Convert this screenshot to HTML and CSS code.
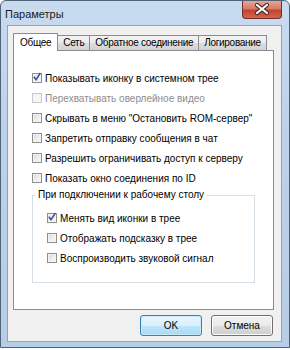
FILE: index.html
```html
<!DOCTYPE html>
<html lang="ru">
  <head>
    <meta charset="UTF-8" />
    <meta name="viewport" content="width=device-width, initial-scale=1.0" />
    <title>Параметры</title>
    <link rel="stylesheet" href="styles.css">
  </head>
  <body>
    <div class="window">
      <div class="titlebar">
        <span class="title">Параметры</span>
        <div class="close">
          <svg width="38" height="17" viewBox="0 0 38 17">
            <path d="M14 4 L24 12 M24 4 L14 12" stroke="#4a2a28" stroke-width="4.2" stroke-linecap="round" />
            <path d="M14 4 L24 12 M24 4 L14 12" stroke="#ffffff" stroke-width="2.2" stroke-linecap="round" />
          </svg>
        </div>
      </div>

      <div class="client">
        <div class="tabs">
          <div class="tab tab-active">Общее</div>
          <div class="tab">Сеть</div>
          <div class="tab">Обратное соединение</div>
          <div class="tab">Логирование</div>
        </div>

        <div class="panel">
          <div class="check checked"><span class="box"><svg width="10" height="10" viewBox="0 0 10 10"><path d="M1.8 4.8 L4 7.6 L8.4 1" fill="none" stroke="#3a5896" stroke-width="1.6" /></svg></span>Показывать иконку в системном трее</div>
          <div class="check disabled"><span class="box"></span>Перехватывать оверлейное видео</div>
          <div class="check"><span class="box"></span>Скрывать в меню "Остановить ROM-сервер"</div>
          <div class="check"><span class="box"></span>Запретить отправку сообщения в чат</div>
          <div class="check"><span class="box"></span>Разрешить ограничивать доступ к серверу</div>
          <div class="check"><span class="box"></span>Показать окно соединения по ID</div>

          <fieldset class="group">
            <legend>При подключении к рабочему столу</legend>
            <div class="check checked"><span class="box"><svg width="10" height="10" viewBox="0 0 10 10"><path d="M1.8 4.8 L4 7.6 L8.4 1" fill="none" stroke="#3a5896" stroke-width="1.6" /></svg></span>Менять вид иконки в трее</div>
            <div class="check"><span class="box"></span>Отображать подсказку в трее</div>
            <div class="check"><span class="box"></span>Воспроизводить звуковой сигнал</div>
          </fieldset>
        </div>

        <div class="btn-container">
          <button class="btn btn-default">OK</button>
          <button class="btn">Отмена</button>
        </div>
      </div>
    </div>
  </body>
</html>
```

FILE: styles.css
```css
body {
  margin: 0;
  background-color: #ffffff;
  font-family: "Liberation Sans", Arial, sans-serif;
  font-size: 10px;
  color: #000;
}

/* Window frame (Aero style) */
.window {
  width: 290px;
  height: 348px;
  box-sizing: border-box;
  display: flex;
  flex-direction: column;
  border: 1px solid #4f6378;
  border-radius: 6px 6px 0 0;
  padding: 0 7px 5px 6px;
  background: linear-gradient(180deg, #c8dbef 0%, #bcd2ea 40%, #b6cde6 100%);
}

.titlebar {
  height: 24px;
  display: flex;
  justify-content: space-between;
  align-items: flex-start;
}

.title {
  font-size: 11px;
  margin-top: 7px;
  margin-left: -2px;
  color: #1a1a1a;
}

.close {
  width: 38px;
  height: 17px;
  border: 1px solid #6b3029;
  border-top: none;
  border-radius: 0 0 4px 4px;
  background: linear-gradient(180deg, #e7a596 0%, #d77a69 45%, #c4432f 55%, #d4644c 100%);
}

.close svg {
  display: block;
}

.client {
  flex: 1;
  display: flex;
  flex-direction: column;
  border: 1px solid #90a4bb;
  background-color: #f0f0f0;
  padding: 7px 7px 5px 5px;
}

/* Tabs */
.tabs {
  height: 17px;
  display: flex;
  align-items: flex-end;
  font-size: 10px;
  letter-spacing: -0.3px;
}

.tab {
  height: 14px;
  line-height: 14px;
  padding: 0 5px;
  border: 1px solid #898c95;
  border-bottom: none;
  border-left: none;
  background: linear-gradient(180deg, #f3f3f3 0%, #ebebeb 50%, #dddddd 51%, #d3d3d3 100%);
  white-space: nowrap;
}

.tab-active {
  height: 17px;
  line-height: 17px;
  margin-bottom: -1px;
  padding: 0 6px;
  border-left: 1px solid #898c95;
  background: #ffffff;
  position: relative;
  z-index: 1;
}

.panel {
  flex: 1;
  border: 1px solid #898c95;
  background-color: #ffffff;
  padding: 17px 0 0 18px;
}

/* Checkboxes */
.check {
  height: 20px;
  display: flex;
  align-items: center;
  white-space: nowrap;
}

.box {
  width: 8px;
  height: 8px;
  margin-right: 3px;
  border: 1px solid #8e8f8f;
  background: linear-gradient(135deg, #d6d6d6 0%, #f0f0f0 60%, #fafafa 100%);
  box-shadow: inset 0 0 0 1px #f4f4f4;
  position: relative;
}

.box svg {
  position: absolute;
  left: -1px;
  top: -2px;
}

.checked .box {
  background: linear-gradient(135deg, #e4e4e4 0%, #f8f8f8 100%);
}

.disabled {
  color: #8d8d8d;
}

.disabled .box {
  border-color: #c9c9c9;
  background: #f6f6f6;
}

/* Group box */
.group {
  width: 223px;
  box-sizing: border-box;
  margin: -1px 0 0 0;
  padding: 5px 0 14px 14px;
  border: 1px solid #d5dfe5;
}

.group legend {
  line-height: 16px;
  padding: 0 3px;
  margin-left: -12px;
}

/* Buttons */
.btn-container {
  display: flex;
  justify-content: flex-end;
  gap: 9px;
  margin-top: 5px;
  padding-right: 1px;
}

.btn {
  width: 62px;
  height: 21px;
  padding: 0;
  font-family: inherit;
  font-size: 10px;
  color: #000;
  border: 1px solid #707070;
  border-radius: 3px;
  background: linear-gradient(180deg, #f2f2f2 0%, #ebebeb 50%, #dddddd 51%, #cfcfcf 100%);
  box-shadow: inset 0 0 0 1px #fcfcfc;
}

.btn-default {
  border-color: #3c7fb1;
  background: linear-gradient(180deg, #eaf6fd 0%, #d9f0fc 50%, #bee6fd 51%, #a7d9f5 100%);
  box-shadow: inset 0 0 0 1px #c9e8fa;
}
```
